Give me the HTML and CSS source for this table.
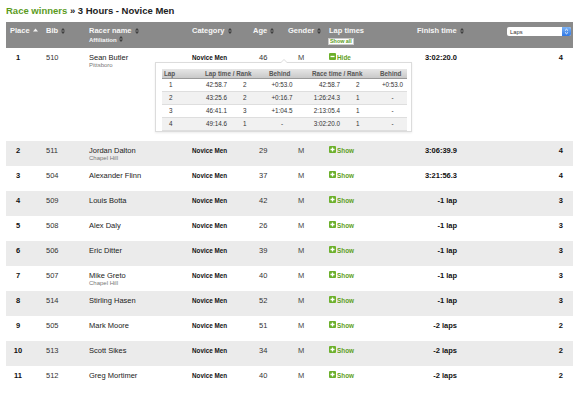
FILE: index.html
```html
<!DOCTYPE html>
<html lang="en">
<head>
    <meta charset="UTF-8">
    <title>Race winners - 3 Hours - Novice Men</title>
    <link rel="stylesheet" href="styles.css">
</head>
<body>
    <h1 class="crumbs"><a class="crumbs-link" href="#">Race winners</a> » 3 Hours - Novice Men</h1>

    <table class="results">
        <colgroup>
            <col style="width:38px"><col style="width:43px"><col style="width:103px">
            <col style="width:61px"><col style="width:35px"><col style="width:41px">
            <col style="width:88px"><col style="width:90px"><col style="width:68px">
        </colgroup>
        <thead>
            <tr>
                <th class="th-place">Place <svg class="sort-up" viewBox="0 0 5 4"><path d="M2.5 0.5L5 3.5H0Z"/></svg></th>
                <th>Bib <svg class="sort" viewBox="0 0 4 6"><path d="M2 0L4 2.6H0ZM0 3.4H4L2 6Z"/></svg></th>
                <th>Racer name <svg class="sort" viewBox="0 0 4 6"><path d="M2 0L4 2.6H0ZM0 3.4H4L2 6Z"/></svg>
                    <div class="th-sub">Affiliation <svg class="sort" viewBox="0 0 4 6"><path d="M2 0L4 2.6H0ZM0 3.4H4L2 6Z"/></svg></div>
                </th>
                <th>Category <svg class="sort" viewBox="0 0 4 6"><path d="M2 0L4 2.6H0ZM0 3.4H4L2 6Z"/></svg></th>
                <th>Age <svg class="sort" viewBox="0 0 4 6"><path d="M2 0L4 2.6H0ZM0 3.4H4L2 6Z"/></svg></th>
                <th>Gender <svg class="sort" viewBox="0 0 4 6"><path d="M2 0L4 2.6H0ZM0 3.4H4L2 6Z"/></svg></th>
                <th>Lap times
                    <div><span class="show-all">Show all</span></div>
                </th>
                <th>Finish time <svg class="sort" viewBox="0 0 4 6"><path d="M2 0L4 2.6H0ZM0 3.4H4L2 6Z"/></svg></th>
                <th>
                    <div class="select">
                        <span>Laps</span>
                        <span class="select-arrows"><svg viewBox="0 0 5 7"><path d="M1 2.6L2.5 1.2L4 2.6M1 4.4L2.5 5.8L4 4.4" fill="none" stroke="#fff" stroke-width="0.9"/></svg></span>
                    </div>
                </th>
            </tr>
        </thead>
        <tbody>
            <tr class="is-open">
                <td class="place">1</td>
                <td>510</td>
                <td><div class="racer">Sean Butler</div><div class="affiliation">Pittsboro</div></td>
                <td class="category">Novice Men</td>
                <td class="age">46</td>
                <td class="gender">M</td>
                <td class="laps-cell">
                    <span class="toggle"><svg class="toggle-icon" viewBox="0 0 7 7"><rect width="7" height="7" rx="1" fill="#6cb02b"/><path d="M1.5 3.5h4" stroke="#fff" stroke-width="1.3"/></svg>Hide</span>
                    <div class="lap-popup">
                        <table class="lap-table">
                            <colgroup>
                                <col style="width:41px"><col style="width:37px"><col style="width:27px">
                                <col style="width:43px"><col style="width:35px"><col style="width:33px">
                                <col style="width:29px">
                            </colgroup>
                            <thead>
                                <tr>
                                    <th>Lap</th>
                                    <th colspan="2">Lap time / Rank</th>
                                    <th>Behind</th>
                                    <th colspan="2">Race time / Rank</th>
                                    <th>Behind</th>
                                </tr>
                            </thead>
                            <tbody>
                                <tr><td class="lap-no">1</td><td>42:58.7</td><td>2</td><td class="behind">+0:53.0</td><td class="race-time">42:58.7</td><td class="race-rank">2</td><td class="behind-total">+0:53.0</td></tr>
                                <tr><td class="lap-no">2</td><td>43:25.6</td><td>2</td><td class="behind">+0:16.7</td><td class="race-time">1:26:24.3</td><td class="race-rank">1</td><td class="behind-total">-</td></tr>
                                <tr><td class="lap-no">3</td><td>46:41.1</td><td>3</td><td class="behind">+1:04.5</td><td class="race-time">2:13:05.4</td><td class="race-rank">1</td><td class="behind-total">-</td></tr>
                                <tr><td class="lap-no">4</td><td>49:14.6</td><td>1</td><td class="behind">-</td><td class="race-time">3:02:20.0</td><td class="race-rank">1</td><td class="behind-total">-</td></tr>
                            </tbody>
                        </table>
                    </div>
                </td>
                <td class="finish">3:02:20.0</td>
                <td class="lap-count">4</td>
            </tr>
            <tr>
                <td class="place">2</td><td>511</td>
                <td><div class="racer">Jordan Dalton</div><div class="affiliation">Chapel Hill</div></td>
                <td class="category">Novice Men</td><td class="age">29</td><td class="gender">M</td>
                <td><span class="toggle"><svg class="toggle-icon" viewBox="0 0 7 7"><rect width="7" height="7" rx="1" fill="#6cb02b"/><path d="M3.5 1.5v4M1.5 3.5h4" stroke="#fff" stroke-width="1.3"/></svg>Show</span></td>
                <td class="finish">3:06:39.9</td><td class="lap-count">4</td>
            </tr>
            <tr>
                <td class="place">3</td><td>504</td>
                <td><div class="racer">Alexander Flinn</div></td>
                <td class="category">Novice Men</td><td class="age">37</td><td class="gender">M</td>
                <td><span class="toggle"><svg class="toggle-icon" viewBox="0 0 7 7"><rect width="7" height="7" rx="1" fill="#6cb02b"/><path d="M3.5 1.5v4M1.5 3.5h4" stroke="#fff" stroke-width="1.3"/></svg>Show</span></td>
                <td class="finish">3:21:56.3</td><td class="lap-count">4</td>
            </tr>
            <tr>
                <td class="place">4</td><td>509</td>
                <td><div class="racer">Louis Botta</div></td>
                <td class="category">Novice Men</td><td class="age">42</td><td class="gender">M</td>
                <td><span class="toggle"><svg class="toggle-icon" viewBox="0 0 7 7"><rect width="7" height="7" rx="1" fill="#6cb02b"/><path d="M3.5 1.5v4M1.5 3.5h4" stroke="#fff" stroke-width="1.3"/></svg>Show</span></td>
                <td class="finish">-1 lap</td><td class="lap-count">3</td>
            </tr>
            <tr>
                <td class="place">5</td><td>508</td>
                <td><div class="racer">Alex Daly</div></td>
                <td class="category">Novice Men</td><td class="age">26</td><td class="gender">M</td>
                <td><span class="toggle"><svg class="toggle-icon" viewBox="0 0 7 7"><rect width="7" height="7" rx="1" fill="#6cb02b"/><path d="M3.5 1.5v4M1.5 3.5h4" stroke="#fff" stroke-width="1.3"/></svg>Show</span></td>
                <td class="finish">-1 lap</td><td class="lap-count">3</td>
            </tr>
            <tr>
                <td class="place">6</td><td>506</td>
                <td><div class="racer">Eric Ditter</div></td>
                <td class="category">Novice Men</td><td class="age">39</td><td class="gender">M</td>
                <td><span class="toggle"><svg class="toggle-icon" viewBox="0 0 7 7"><rect width="7" height="7" rx="1" fill="#6cb02b"/><path d="M3.5 1.5v4M1.5 3.5h4" stroke="#fff" stroke-width="1.3"/></svg>Show</span></td>
                <td class="finish">-1 lap</td><td class="lap-count">3</td>
            </tr>
            <tr>
                <td class="place">7</td><td>507</td>
                <td><div class="racer">Mike Greto</div><div class="affiliation">Chapel Hill</div></td>
                <td class="category">Novice Men</td><td class="age">40</td><td class="gender">M</td>
                <td><span class="toggle"><svg class="toggle-icon" viewBox="0 0 7 7"><rect width="7" height="7" rx="1" fill="#6cb02b"/><path d="M3.5 1.5v4M1.5 3.5h4" stroke="#fff" stroke-width="1.3"/></svg>Show</span></td>
                <td class="finish">-1 lap</td><td class="lap-count">3</td>
            </tr>
            <tr>
                <td class="place">8</td><td>514</td>
                <td><div class="racer">Stirling Hasen</div></td>
                <td class="category">Novice Men</td><td class="age">52</td><td class="gender">M</td>
                <td><span class="toggle"><svg class="toggle-icon" viewBox="0 0 7 7"><rect width="7" height="7" rx="1" fill="#6cb02b"/><path d="M3.5 1.5v4M1.5 3.5h4" stroke="#fff" stroke-width="1.3"/></svg>Show</span></td>
                <td class="finish">-1 lap</td><td class="lap-count">3</td>
            </tr>
            <tr>
                <td class="place">9</td><td>505</td>
                <td><div class="racer">Mark Moore</div></td>
                <td class="category">Novice Men</td><td class="age">51</td><td class="gender">M</td>
                <td><span class="toggle"><svg class="toggle-icon" viewBox="0 0 7 7"><rect width="7" height="7" rx="1" fill="#6cb02b"/><path d="M3.5 1.5v4M1.5 3.5h4" stroke="#fff" stroke-width="1.3"/></svg>Show</span></td>
                <td class="finish">-2 laps</td><td class="lap-count">2</td>
            </tr>
            <tr>
                <td class="place">10</td><td>513</td>
                <td><div class="racer">Scott Sikes</div></td>
                <td class="category">Novice Men</td><td class="age">34</td><td class="gender">M</td>
                <td><span class="toggle"><svg class="toggle-icon" viewBox="0 0 7 7"><rect width="7" height="7" rx="1" fill="#6cb02b"/><path d="M3.5 1.5v4M1.5 3.5h4" stroke="#fff" stroke-width="1.3"/></svg>Show</span></td>
                <td class="finish">-2 laps</td><td class="lap-count">2</td>
            </tr>
            <tr>
                <td class="place">11</td><td>512</td>
                <td><div class="racer">Greg Mortimer</div></td>
                <td class="category">Novice Men</td><td class="age">40</td><td class="gender">M</td>
                <td><span class="toggle"><svg class="toggle-icon" viewBox="0 0 7 7"><rect width="7" height="7" rx="1" fill="#6cb02b"/><path d="M3.5 1.5v4M1.5 3.5h4" stroke="#fff" stroke-width="1.3"/></svg>Show</span></td>
                <td class="finish">-2 laps</td><td class="lap-count">2</td>
            </tr>
        </tbody>
    </table>
</body>
</html>
```

FILE: styles.css
```css
body {
    margin: 0;
    padding: 5px 6px;
    font-family: "Liberation Sans", Arial, sans-serif;
    color: #333;
    background: #fff;
}
.crumbs {
    margin: 0 0 6px;
    font-size: 9.5px;
    line-height: 11px;
    font-weight: bold;
    color: #222;
}
.crumbs-link {
    color: #5b9b1d;
    text-decoration: none;
}
.results {
    width: 567px;
    table-layout: fixed;
    border-collapse: collapse;
}
.results > thead > tr {
    height: 26px;
}
.results > thead th {
    background: #8a8a8a;
    color: #f6f6f6;
    font-size: 7.5px;
    line-height: 8px;
    font-weight: bold;
    text-align: left;
    vertical-align: top;
    padding: 5px 2px 0;
    white-space: nowrap;
}
.results > thead th.th-place {
    padding-left: 4px;
}
.sort {
    width: 4px;
    height: 6px;
    margin-left: 1px;
    vertical-align: -0.5px;
    fill: #3e3e3e;
}
.sort-up {
    width: 5px;
    height: 4px;
    margin-left: 1px;
    vertical-align: 1px;
    fill: #f2f2f2;
}
.th-sub {
    font-size: 6px;
    line-height: 7px;
    margin-top: 1px;
}
.show-all {
    display: inline-block;
    margin: 3px 0 0 -1px;
    padding: 0 1px;
    border: 1px solid #c9c9c9;
    background: #fff;
    color: #5b9b1d;
    font-size: 5.4px;
    line-height: 5px;
}
.select {
    display: flex;
    align-items: center;
    width: 64px;
    height: 9px;
    margin-top: 0;
    padding-left: 3px;
    box-sizing: border-box;
    background: #fff;
    border-radius: 2px;
    color: #333;
    font-size: 5.8px;
    font-weight: normal;
}
.select-arrows {
    display: flex;
    align-items: center;
    justify-content: center;
    width: 9px;
    height: 9px;
    margin-left: auto;
    background: linear-gradient(#7cb4f7, #2f77e4);
    border-radius: 0 2px 2px 0;
}
.select-arrows svg {
    width: 5px;
    height: 7px;
}
.results > tbody > tr {
    height: 25px;
}
.results > tbody > tr:nth-child(even) {
    background: #ebebeb;
}
.results > tbody > tr.is-open {
    height: 93px;
}
.results > tbody > tr > td {
    font-size: 7.5px;
    line-height: 8px;
    padding: 6px 2px 0;
    vertical-align: top;
    color: #333;
}
.results td.place {
    text-align: center;
    padding-right: 16px;
    font-weight: bold;
    color: #111;
}
.racer {
    color: #222;
}
.affiliation {
    font-size: 6px;
    line-height: 7px;
    color: #777;
}
.results td.category {
    font-size: 6.3px;
    font-weight: bold;
    color: #111;
}
.results td.age {
    padding-left: 8px;
}
.results td.gender {
    padding-left: 12px;
    color: #444;
}
.results td.finish {
    text-align: right;
    padding-right: 48px;
    font-weight: bold;
    color: #111;
}
.results td.lap-count {
    text-align: right;
    padding-right: 10px;
    font-weight: bold;
    color: #111;
}
.laps-cell {
    position: relative;
}
.toggle {
    color: #5fa022;
    font-size: 6.4px;
    font-weight: bold;
    white-space: nowrap;
}
.toggle-icon {
    width: 7px;
    height: 7px;
    margin: -1px 1px 0 0;
    vertical-align: top;
}

/* lap details popup */
.lap-popup {
    position: absolute;
    left: -172px;
    top: 14px;
    width: 257px;
    height: 70px;
    box-sizing: border-box;
    padding: 6px 4px 0 6px;
    background: #fff;
    border: 1px solid #dcdcdc;
    box-shadow: 0 1px 2px rgba(0, 0, 0, 0.08);
}
.lap-popup::before {
    content: "";
    position: absolute;
    top: -4px;
    left: 124px;
    border: 4px solid transparent;
    border-top: 0;
    border-bottom-color: #dcdcdc;
}
.lap-popup::after {
    content: "";
    position: absolute;
    top: -3px;
    left: 125px;
    border: 3px solid transparent;
    border-top: 0;
    border-bottom-color: #fff;
}
.lap-table {
    width: 245px;
    table-layout: fixed;
    border-collapse: collapse;
    font-size: 6.3px;
}
.lap-table th {
    height: 9px;
    padding: 0 0 0 2px;
    background: linear-gradient(#e6e6e6, #c9c9c9);
    border-bottom: 1px solid #9a9a9a;
    color: #555;
    font-weight: bold;
    text-align: left;
    line-height: 9px;
    white-space: nowrap;
}
.lap-table td {
    height: 12px;
    padding: 0 0 0 3px;
    border-bottom: 1px solid #dedede;
    color: #333;
    line-height: 8px;
    white-space: nowrap;
}
.lap-table tbody tr:nth-child(even) {
    background: #f1f1f1;
}
.lap-table td.lap-no {
    padding-left: 7px;
}
.lap-table td.behind {
    text-align: center;
    padding: 0 13px 0 0;
}
.lap-table td.race-time {
    text-align: right;
    padding: 0 5px 0 0;
}
.lap-table td.race-rank {
    padding-left: 11px;
}
.lap-table td.behind-total {
    text-align: center;
    padding: 0;
}
```
